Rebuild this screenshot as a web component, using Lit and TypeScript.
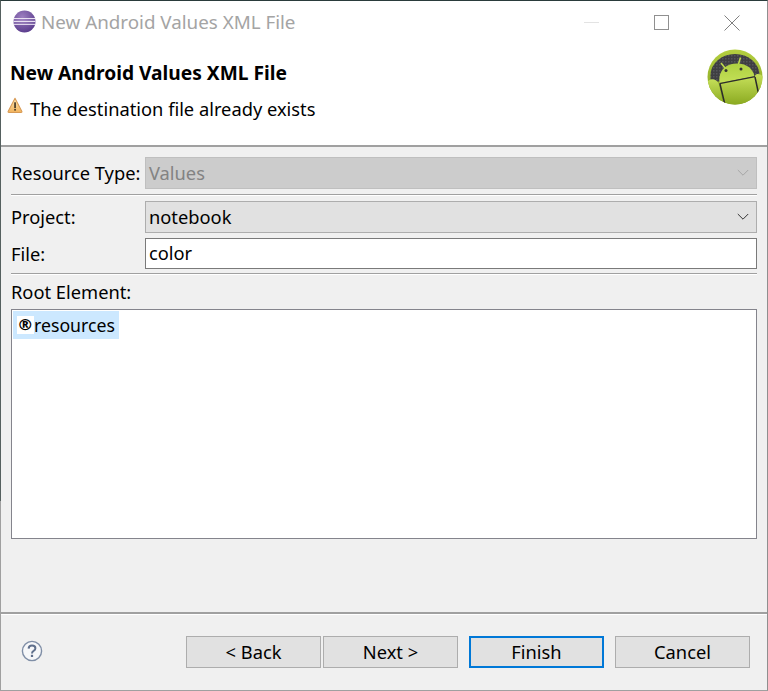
import { LitElement, html, css, svg } from "lit";
import { customElement } from "lit/decorators.js";

const eclipse = svg`<svg class="eclipse" width="23" height="23" viewBox="0 0 23 23">
  <defs>
    <radialGradient id="eg" cx="0.4" cy="0.3" r="0.85"><stop offset="0" stop-color="#9d7fc0"/><stop offset="1" stop-color="#4f3184"/></radialGradient>
    <clipPath id="ec"><circle cx="11.5" cy="11.5" r="11"/></clipPath>
  </defs>
  <circle cx="11.5" cy="11.5" r="11" fill="url(#eg)"/>
  <g clip-path="url(#ec)" fill="#e9e1f2">
    <rect x="0" y="8" width="23" height="1.1"/>
    <rect x="0" y="10.8" width="23" height="1.3"/>
    <rect x="0" y="13.8" width="23" height="1.1"/>
  </g>
</svg>`;

const warn = svg`<svg width="16" height="17" viewBox="0 0 15 16">
  <defs><linearGradient id="wg" x1="0" y1="0" x2="0" y2="1"><stop offset="0" stop-color="#fbe7b4"/><stop offset="1" stop-color="#f2b35c"/></linearGradient></defs>
  <path d="M7.5 1.2 L14 13.6 Q14.2 14.5 13.2 14.5 L1.8 14.5 Q.8 14.5 1 13.6 Z" fill="url(#wg)" stroke="#d79a55" stroke-width="1" stroke-linejoin="round"/>
  <rect x="6.8" y="5" width="1.5" height="5.4" fill="#3a3020"/>
  <rect x="6.8" y="11.2" width="1.5" height="1.6" fill="#3a3020"/>
</svg>`;

const android = svg`<svg width="56" height="56" viewBox="0 0 56 56">
  <defs>
    <linearGradient id="ag" x1="0" y1="0" x2="0" y2="1"><stop offset="0" stop-color="#b5d040"/><stop offset="1" stop-color="#7e9d1c"/></linearGradient>
    <linearGradient id="bg" x1="0" y1="0" x2="0" y2="1"><stop offset="0" stop-color="#c4de58"/><stop offset="1" stop-color="#8aa920"/></linearGradient>
    <linearGradient id="hg" x1="0" y1="0" x2="0" y2="1"><stop offset="0" stop-color="#aed040"/><stop offset="1" stop-color="#c4e058"/></linearGradient>
    <pattern id="gr" width="3" height="3" patternUnits="userSpaceOnUse"><rect width="3" height="3" fill="#3e3e42"/><rect width="1.5" height="1.5" fill="#55555a"/></pattern>
    <clipPath id="ac"><circle cx="28" cy="28" r="27.5"/></clipPath>
  </defs>
  <circle cx="28" cy="28" r="27.5" fill="url(#ag)"/>
  <g clip-path="url(#ac)">
    <path d="M3.5 33 L3.5 26 A24.5 21 0 0 1 52.5 26 L52.5 30 Z" fill="url(#gr)"/>
    <path d="M0 56 L0 34 Q2 29.5 7 30.5 Q11 31.5 12 36 L16.5 56 Z" fill="url(#bg)"/>
    <path d="M56 56 L56 28 Q54 24.5 50 25 Q47 26 48 30 L52 50 L50 56 Z" fill="url(#bg)"/>
    <path d="M13 34.5 L48 27.5 L53.5 56 L17.5 56 Z" fill="url(#bg)"/>
    <path d="M12.5 34 Q11 20 23 15.5 Q30 13.4 37 15.5 Q46 19 47.5 27.5 Z" fill="url(#hg)"/>
    <path d="M12.5 34.6 L48 27.6" stroke="#2c2c2c" stroke-width="1.3" fill="none"/>
    <path d="M13 35 L18 56 M48 28 L52.5 49" stroke="#2c2c2c" stroke-width="1.5" fill="none"/>
    <path d="M18 19 L14 14 M31.5 15 L33.5 8.5" stroke="#bcd94e" stroke-width="1.6" fill="none"/>
    <circle cx="19" cy="21.5" r="1.5" fill="#333"/><circle cx="34" cy="20" r="1.5" fill="#333"/>
  </g>
</svg>`;

const help = svg`<svg width="22" height="22" viewBox="0 0 22 22">
  <circle cx="11" cy="11" r="9.6" fill="#f6f7f9" stroke="#7f8ea6" stroke-width="1.4"/>
  <path d="M7.6 8.6 Q7.8 5.6 11 5.6 Q14.4 5.6 14.4 8.2 Q14.4 9.8 12.6 10.8 Q11 11.6 11 13.4" fill="none" stroke="#5f6f8c" stroke-width="2"/>
  <rect x="9.9" y="14.8" width="2.2" height="2.2" fill="#5f6f8c"/>
</svg>`;

const chevron = svg`<svg width="12" height="8" viewBox="0 0 12 8"><path d="M.8 1 L6 6.2 L11.2 1" fill="none" stroke="currentColor" stroke-width="1"/></svg>`;

@customElement("app-root")
export class AppRoot extends LitElement {
  static styles = css`
    :host {
      display: block;
      width: 768px;
      height: 691px;
      font-family: "Noto Sans", "Open Sans", sans-serif;
      font-size: 18.3px;
      color: #000;
      overflow: hidden;
    }
    .win {
      position: relative;
      box-sizing: border-box;
      height: 691px;
      display: flex;
      flex-direction: column;
      background: #f0f0f0;
      border-top: 1px solid #2a3b3b;
      border-left: 1px solid #55605f;
      border-right: 1px solid #8f8f8f;
      border-bottom: 1px solid #a0a0a0;
    }
    .win::before {
      content: "";
      position: absolute;
      left: -1px;
      top: 500px;
      width: 1px;
      height: 190px;
      background: #a0a0a0;
    }
    .titlebar {
      height: 43px;
      flex: none;
      background: #fff;
      display: flex;
      align-items: center;
      padding-left: 12px;
    }
    .eclipse { margin-top: -2px; }
    .title {
      margin-left: 5px;
      margin-top: -2px;
      color: #a4a4a4;
      font-size: 18.8px;
      line-height: 24px;
      flex: 1;
    }
    .wc {
      display: flex;
      justify-content: center;
      align-items: center;
      align-self: stretch;
    }
    .wc.min { width: 69px; }
    .wc.max { width: 71px; }
    .wc.close { width: 70px; }
    .header {
      height: 101px;
      flex: none;
      background: #fff;
      border-bottom: 2px solid #a0a0a0;
      display: flex;
      justify-content: space-between;
      padding: 0 4px 0 0;
    }
    .hleft {
      display: flex;
      flex-direction: column;
      padding: 17px 0 0 9px;
    }
    h1 {
      margin: 0;
      font-size: 19.2px;
      line-height: 24px;
      font-weight: 700;
    }
    .msg {
      display: flex;
      align-items: center;
      margin: 12px 0 0 -3px;
      line-height: 24px;
      gap: 7px;
    }
    .msg svg { margin-top: -7px; }
    .logo { margin-top: 5px; }
    .form {
      flex: 1;
      display: flex;
      flex-direction: column;
      padding: 10px 10px 0 10px;
    }
    .row {
      display: grid;
      grid-template-columns: 134px 1fr;
      align-items: center;
    }
    .combo {
      box-sizing: border-box;
      height: 32px;
      border: 1px solid #adadad;
      background: #e1e1e1;
      display: flex;
      align-items: center;
      justify-content: space-between;
      padding: 0 7px 0 3px;
      line-height: 24px;
      color: #333;
    }
    .combo.disabled {
      background: #cccccc;
      border-color: #bfbfbf;
      color: #a6a6a6;
    }
    .combo.disabled .v { color: #838383; }
    .combo .v { color: #000; }
    .input {
      box-sizing: border-box;
      height: 31px;
      border: 1px solid #7a7a7a;
      background: #fff;
      padding: 0 3px;
      line-height: 28px;
    }
    .sep {
      height: 0;
      border-top: 1px solid #a0a0a0;
      border-bottom: 1px solid #fff;
      flex: none;
    }
    .s1 { margin: 5px 0 5px; }
    .s2 { margin: 4px 0 5px; }
    .gap5 { margin-top: 5px; }
    .label { line-height: 24px; }
    .rootlabel { line-height: 24px; }
    .list {
      box-sizing: border-box;
      height: 230px;
      margin-top: 5px;
      background: #fff;
      border: 1px solid #84848c;
      padding: 1px;
      flex: none;
    }
    .item {
      display: flex;
      align-items: center;
      box-sizing: border-box;
      width: 106px;
      height: 28px;
      padding: 0 0 0 4px;
      background: #cce8ff;
      line-height: 24px;
      font-size: 17.7px;
      white-space: nowrap;
    }
    .glyph {
      background: #fff;
      font-size: 16.5px;
      font-weight: 700;
      line-height: 18px;
      width: 17px;
      flex: none;
      text-align: left;
      font-family: "DejaVu Sans", sans-serif;
    }
    .footer-sep {
      height: 0;
      flex: none;
      border-top: 2px solid #a0a0a0;
      border-bottom: 1px solid #fff;
    }
    .footer {
      box-sizing: border-box;
      height: 75px;
      flex: none;
      display: flex;
      align-items: flex-start;
      padding: 21px 17px 0 20px;
    }
    .help { margin-top: 4px; }
    .buttons {
      margin-left: auto;
      display: flex;
    }
    .btn {
      box-sizing: border-box;
      width: 135px;
      height: 32px;
      border: 1px solid #adadad;
      background: #e1e1e1;
      display: flex;
      align-items: center;
      justify-content: center;
      line-height: 24px;
    }
    .btn.next { margin-left: 2px; }
    .btn.finish { margin-left: 11px; border: 2px solid #0078d7; }
    .btn.cancel { margin-left: 11px; }
  `;

  render() {
    return html`<div class="win">
      <div class="titlebar">
        ${eclipse}
        <div class="title">New Android Values XML File</div>
        <div class="wc min"><svg width="16" height="2"><rect width="15" height="1" y="0" fill="#e3e3e3"/></svg></div>
        <div class="wc max"><svg width="15" height="15"><rect x=".5" y=".5" width="14" height="14" fill="none" stroke="#909090"/></svg></div>
        <div class="wc close"><svg width="16" height="16"><path d="M.5 .5 L15.5 15.5 M15.5 .5 L.5 15.5" stroke="#808080" fill="none"/></svg></div>
      </div>
      <div class="header">
        <div class="hleft">
          <h1>New Android Values XML File</h1>
          <div class="msg">${warn}<span>The destination file already exists</span></div>
        </div>
        <div class="logo">${android}</div>
      </div>
      <div class="form">
        <div class="row">
          <span class="label">Resource Type:</span>
          <div class="combo disabled"><span class="v">Values</span>${chevron}</div>
        </div>
        <div class="sep s1"></div>
        <div class="row">
          <span class="label">Project:</span>
          <div class="combo"><span class="v">notebook</span>${chevron}</div>
        </div>
        <div class="row gap5">
          <span class="label">File:</span>
          <div class="input">color</div>
        </div>
        <div class="sep s2"></div>
        <div class="rootlabel">Root Element:</div>
        <div class="list"><div class="item"><span class="glyph">®</span>resources</div></div>
      </div>
      <div class="footer-sep"></div>
      <div class="footer">
        <div class="help">${help}</div>
        <div class="buttons">
          <div class="btn">&lt; Back</div>
          <div class="btn next">Next &gt;</div>
          <div class="btn finish">Finish</div>
          <div class="btn cancel">Cancel</div>
        </div>
      </div>
    </div>`;
  }
}
